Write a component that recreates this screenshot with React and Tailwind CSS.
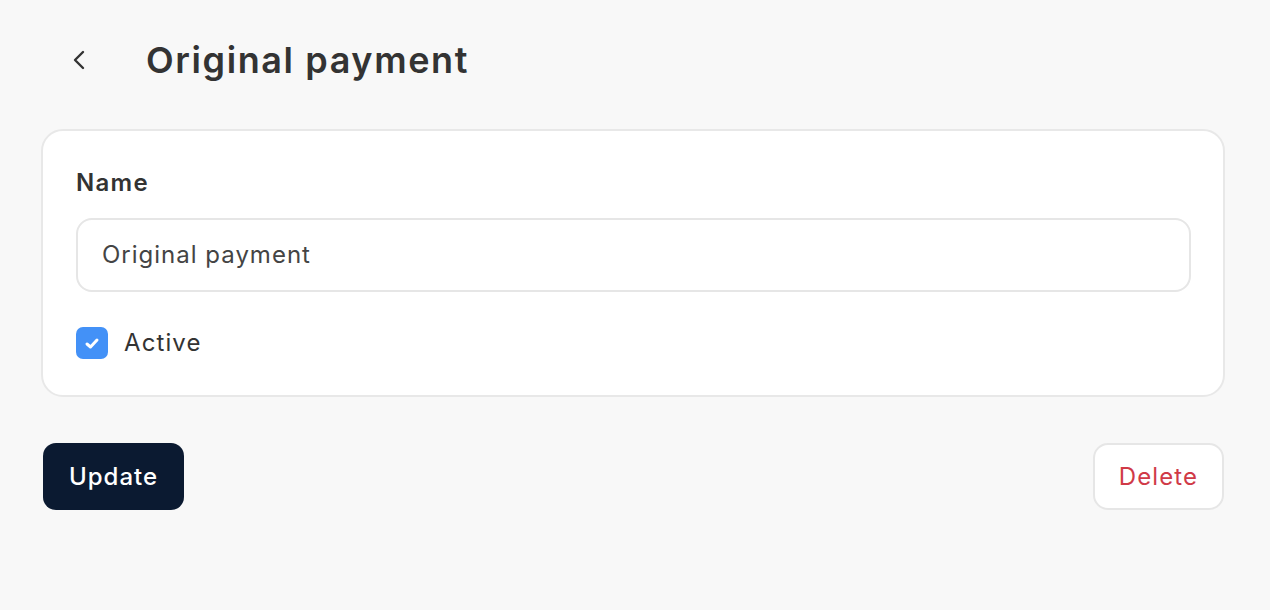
export default function App() {
  return (
    <div className="min-h-screen w-full bg-[#f8f8f8] font-['Inter',sans-serif] text-[#333333] [font-variation-settings:'opsz'_14]">
      <div className="ml-[41px] w-[1184px] pt-[30px]">
        {/* Header */}
        <div className="flex h-[60px] items-center">
          <button className="ml-[30px] flex h-[24px] w-[16px] items-center justify-center text-[#333333]">
            <svg width="14" height="20" viewBox="0 0 14 20" fill="none">
              <polyline points="11,2 3,10 11,18" stroke="currentColor" strokeWidth="2.4" strokeLinecap="round" strokeLinejoin="round" />
            </svg>
          </button>
          <h1 className="ml-[59px] text-[36px] font-semibold tracking-[1.6px] text-[#333333]">Original payment</h1>
        </div>

        {/* Card */}
        <div className="mt-[39px] rounded-[22px] border-2 border-[#e8e8e8] bg-white px-[33px] pt-[36px] pb-[34px]">
          <label className="block text-[24px] leading-[32px] font-semibold tracking-[1.3px] text-[#333333]">Name</label>
          <div className="mt-[19px] flex h-[74px] w-[1115px] items-center rounded-[16px] border-2 border-[#e6e6e6] bg-white px-[24px]">
            <span className="text-[24px] tracking-[1px] text-[#444444]">Original payment</span>
          </div>
          <div className="mt-[33px] flex items-center gap-[16px]">
            <div className="flex h-[32px] w-[32px] items-center justify-center rounded-[7px] bg-[#4391f7]">
              <svg width="16" height="13" viewBox="0 0 16 13" fill="none">
                <polyline points="3,7 6.5,10 13,3" stroke="white" strokeWidth="3" strokeLinecap="round" strokeLinejoin="round" />
              </svg>
            </div>
            <span className="text-[24px] tracking-[1.1px] text-[#333333]">Active</span>
          </div>
        </div>

        {/* Actions */}
        <div className="mt-[46px] flex items-center justify-between pl-[2px] pr-[1px]">
          <button className="h-[67px] w-[141px] rounded-[13px] bg-[#0b1a31] text-[24px] font-medium tracking-[1px] text-white">
            Update
          </button>
          <button className="h-[67px] w-[131px] rounded-[15px] border-2 border-[#e6e6e6] bg-white text-[24px] tracking-[1.1px] text-[#d03a47]">
            Delete
          </button>
        </div>
      </div>
    </div>
  );
}
